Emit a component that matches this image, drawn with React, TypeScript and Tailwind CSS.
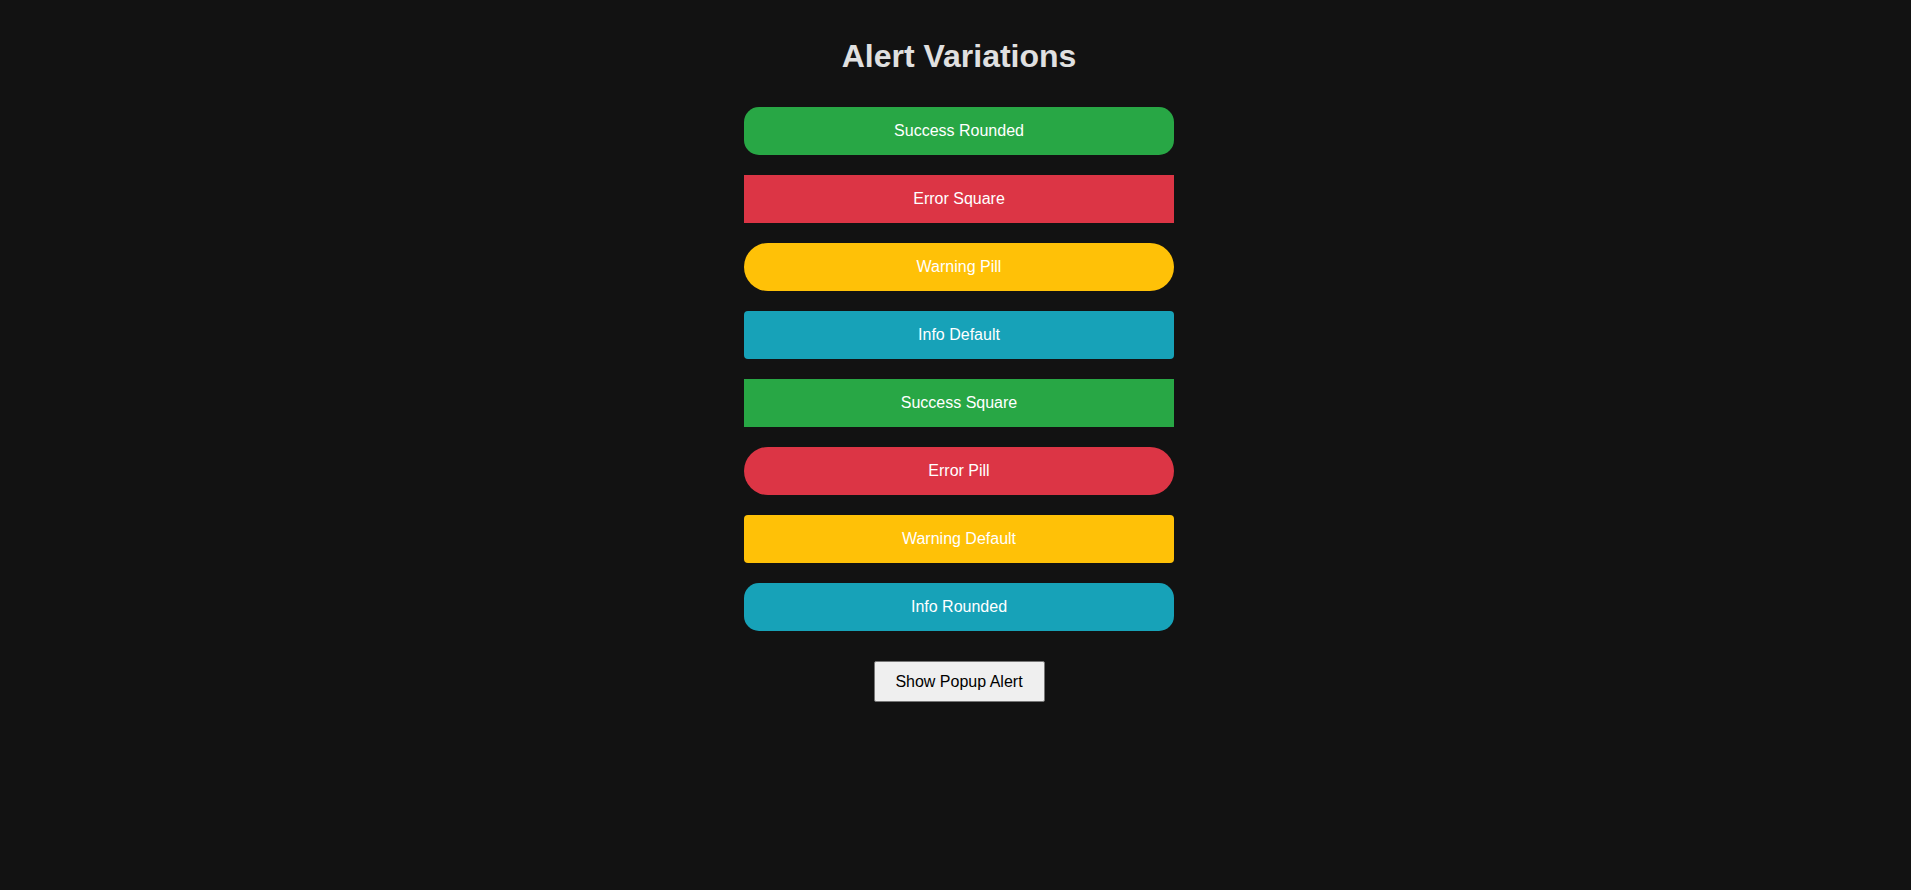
import React from "react";

type Alert = { label: string; color: string; shape: string };

const alerts: Alert[] = [
  { label: "Success Rounded", color: "bg-[#28a745]", shape: "rounded-[15px]" },
  { label: "Error Square", color: "bg-[#dc3545]", shape: "rounded-none" },
  { label: "Warning Pill", color: "bg-[#ffc107]", shape: "rounded-[24px]" },
  { label: "Info Default", color: "bg-[#17a2b8]", shape: "rounded-[4px]" },
  { label: "Success Square", color: "bg-[#28a745]", shape: "rounded-none" },
  { label: "Error Pill", color: "bg-[#dc3545]", shape: "rounded-[24px]" },
  { label: "Warning Default", color: "bg-[#ffc107]", shape: "rounded-[4px]" },
  { label: "Info Rounded", color: "bg-[#17a2b8]", shape: "rounded-[15px]" },
];

const App = () => {
  return (
    <div className="min-h-screen bg-[#121212] font-['Liberation_Sans',Arial,sans-serif] flex flex-col items-center pt-[38px] pl-[7px]">
      <h1 className="text-[32px] leading-[37px] font-bold text-[#e0e0e0] mb-[32px]">
        Alert Variations
      </h1>
      <div className="flex flex-col gap-[20px]">
        {alerts.map((a) => (
          <div
            key={a.label}
            className={`w-[430px] h-[48px] flex items-center justify-center text-white text-[16px] ${a.color} ${a.shape}`}
          >
            {a.label}
          </div>
        ))}
      </div>
      <button className="mt-[30px] h-[41px] w-[171px] bg-[#efefef] border border-[#767676] rounded-[2px] text-black text-[16px]">
        Show Popup Alert
      </button>
    </div>
  );
};

export default App;
